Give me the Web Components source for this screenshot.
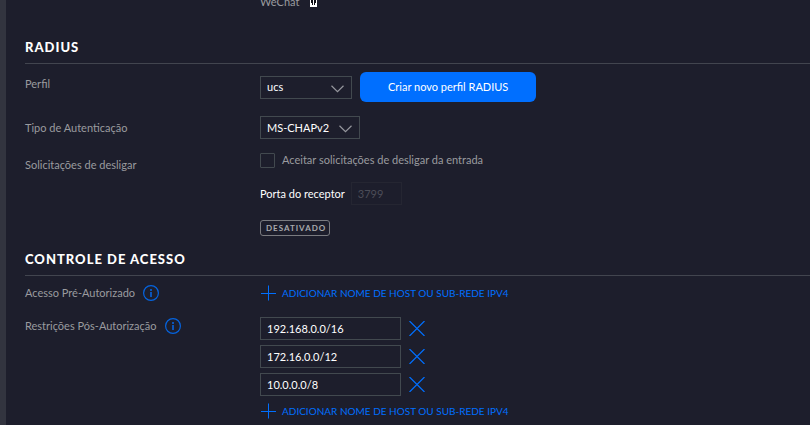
<!DOCTYPE html>
<html lang="pt-BR">
<head>
<meta charset="utf-8">
<meta name="viewport" content="width=device-width, initial-scale=1">
<title>RADIUS e controle de acesso</title>
<style>
  :root {
    --bg: #1d1e2c; --rail: #32343f; --line: #42454f; --field: #42494f;
    --muted: #9a9b9f; --bright: #fff; --accent: #006fff;
  }
  html { background: var(--bg); }
  body { margin: 0; font: 11px/16px Lato, "Open Sans", sans-serif; color: var(--muted); overflow: hidden; }
</style>
</head>
<body>
<settings-page></settings-page>

<template id="t-page">
  <style>
    :host { display: flex; min-height: 100vh; }
    .rail { flex: 0 0 6px; background: var(--rail); }
    main { flex: 1; min-width: 0; padding-left: 19px; }
    .cut { margin: -6px 0 -1px; }
    .cut svg { display: block; margin-bottom: 3px; }
    .inline { display: flex; align-items: center; gap: 8px; }
    .wechat { display: flex; align-items: flex-end; gap: 11px; }
    .stack { display: flex; flex-direction: column; align-items: flex-start; }
    .hosts { gap: 5px; }
    .hosts add-button { margin-top: 2px; }
    .port { margin: 14px 0 15px; }
  </style>
  <div class="rail"></div>
  <main>
    <form-row class="cut">
      <div class="wechat">WeChat
        <svg width="7" height="9" viewBox="0 0 7 9" aria-hidden="true"><path fill="#fff" d="M0 0h7v9H0z"/><path fill="#0b0b12" d="M1 1h5v4H5v2H4V5H3v2H2V5H1z"/><path fill="#fff" d="M3 2h1v3H3z"/></svg>
      </div>
    </form-row>
    <form-section heading="RADIUS">
      <form-row label="Perfil" style="margin-top: 8px; --label-pad: 4px">
        <div class="inline">
          <select-box label="Perfil" value="ucs" style="width: 92px"></select-box>
          <primary-button>Criar novo perfil RADIUS</primary-button>
        </div>
      </form-row>
      <form-row label="Tipo de Autenticação" style="margin-top: 14px; --label-pad: 4px">
        <select-box label="Tipo de Autenticação" value="MS-CHAPv2" style="width: 100px"></select-box>
      </form-row>
      <form-row label="Solicitações de desligar" style="margin-top: 13px; --label-pad: 5px">
        <div class="stack">
          <check-box>Aceitar solicitações de desligar da entrada</check-box>
          <text-field class="port" label="Porta do receptor" value="3799" disabled style="--w: 51px"></text-field>
          <status-badge>DESATIVADO</status-badge>
        </div>
      </form-row>
    </form-section>
    <form-section heading="CONTROLE DE ACESSO" style="margin-top: -15px">
      <form-row label="Acesso Pré-Autorizado" info style="margin-top: 9px">
        <add-button>ADICIONAR NOME DE HOST OU SUB-REDE IPV4</add-button>
      </form-row>
      <form-row label="Restrições Pós-Autorização" info style="margin-top: 16px; --label-pad: 1px">
        <div class="stack hosts">
          <host-entry value="192.168.0.0/16"></host-entry>
          <host-entry value="172.16.0.0/12"></host-entry>
          <host-entry value="10.0.0.0/8"></host-entry>
          <add-button>ADICIONAR NOME DE HOST OU SUB-REDE IPV4</add-button>
        </div>
      </form-row>
    </form-section>
  </main>
</template>

<template id="t-section">
  <style>
    :host { display: block; padding-top: 27px; }
    h2 { margin: 0; padding: 1px 0 6px; font: 900 13px/20px Lato, sans-serif; color: var(--bright); border-bottom: 1px solid var(--line); }
    h2 { letter-spacing: 1px; }
  </style>
  <section><h2></h2><slot></slot></section>
</template>

<template id="t-row">
  <style>
    :host { display: grid; grid-template-columns: 235px minmax(0, 1fr); align-items: start; }
    .label { display: flex; align-items: center; gap: 8px; padding-top: var(--label-pad, 0); }
  </style>
  <div class="label"><span></span></div>
  <div><slot></slot></div>
</template>

<template id="t-select">
  <style>
    :host { display: block; position: relative; box-sizing: border-box; }
    select { appearance: none; display: block; width: 100%; height: 23px; margin: 0; padding: 0 24px 0 6px; border: 1px solid var(--field); border-radius: 0; background: transparent; color: var(--bright); font: inherit; }
    svg { position: absolute; right: 8px; top: 9px; pointer-events: none; }
  </style>
  <select><option></option></select>
  <svg width="13" height="8" viewBox="0 0 13 8" fill="none" stroke="#96979d" stroke-width="1.2" aria-hidden="true"><path d="M.5.8l6 5.8 6-5.8"/></svg>
</template>

<template id="t-primary">
  <style>
    :host { display: block; }
    button { display: block; height: 30px; margin: 0; padding: 0 28px; border: 0; border-radius: 6px; background: var(--accent); color: #fff; font: inherit; white-space: nowrap; }
  </style>
  <button type="button"><slot></slot></button>
</template>

<template id="t-check">
  <style>
    :host { display: block; }
    label { display: flex; align-items: center; gap: 7px; }
    input { appearance: none; width: 15px; height: 15px; margin: 0; border: 1px solid var(--field); border-radius: 1px; }
    input:checked { background: var(--accent); }
  </style>
  <label><input type="checkbox"><span><slot></slot></span></label>
</template>

<template id="t-field">
  <style>
    :host { display: block; color: var(--bright); }
    label { display: flex; align-items: center; gap: 6px; }
    input { box-sizing: border-box; width: var(--w); height: 23px; margin: 0; padding: 0 6px; border: 1px solid var(--field); background: transparent; color: var(--bright); font: inherit; }
    input:disabled { border-color: #252632; color: #4c4d58; }
  </style>
  <label><span></span><input type="text"></label>
</template>

<template id="t-badge">
  <style>
    :host { display: block; box-sizing: border-box; height: 16px; padding: 0 3px 0 5px; border: 1px solid #7a7b80; border-radius: 3px; color: #a9aaae; font: 700 8px/14px Lato, sans-serif; letter-spacing: 1px; }
  </style>
  <slot></slot>
</template>

<template id="t-add">
  <style>
    :host { display: block; }
    button { display: flex; align-items: center; gap: 6px; height: 16px; margin: 0; padding: 0; border: 0; background: none; color: var(--accent); font: 10px/16px Lato, sans-serif; white-space: nowrap; }
  </style>
  <button type="button">
    <svg width="16" height="16" viewBox="0 0 16 16" stroke="currentColor" aria-hidden="true"><path d="M8.500.5v15M1 8.500h15"/></svg>
    <span><slot></slot></span>
  </button>
</template>

<template id="t-host">
  <style>
    :host { display: flex; align-items: center; gap: 8px; }
    input { box-sizing: border-box; width: 141px; height: 23px; margin: 0; padding: 0 6px; border: 1px solid var(--field); background: transparent; color: var(--bright); font: inherit; }
    button { display: block; margin: 0; padding: 0; border: 0; background: none; color: var(--accent); }
    svg { display: block; }
  </style>
  <input type="text" aria-label="Host ou sub-rede IPv4">
  <button type="button" aria-label="Remover">
    <svg width="16" height="15" viewBox="0 0 16 15" stroke="currentColor" stroke-width="1.2" aria-hidden="true"><path d="M.5 0l15 15M15.500 0l-15 15"/></svg>
  </button>
</template>

<template id="t-info">
  <style>:host { display: block; } svg { display: block; }</style>
  <svg width="16" height="16" viewBox="0 0 16 16" role="img" aria-label="Informação"><circle cx="8" cy="8" r="7.400" fill="none" stroke="#0564e0" stroke-width="1.200"/><path fill="#0b55bb" d="M7 4h2v2H7zM7 7h2v5H7z"/></svg>
</template>

<script>
  const define = (name, id, setup = () => {}) => customElements.define(name, class extends HTMLElement {
    constructor() {
      super();
      this.attachShadow({ mode: 'open' }).append(document.getElementById(id).content.cloneNode(true));
    }
    connectedCallback() { setup(this, s => this.shadowRoot.querySelector(s)); }
  });
  define('info-icon', 't-info');
  define('form-section', 't-section', (el, $) => { $('h2').textContent = el.getAttribute('heading'); });
  define('form-row', 't-row', (el, $) => {
    $('span').textContent = el.getAttribute('label') || '';
    if (el.hasAttribute('info')) $('.label').append(document.createElement('info-icon'));
  });
  define('select-box', 't-select', (el, $) => {
    $('option').textContent = el.getAttribute('value');
    $('select').setAttribute('aria-label', el.getAttribute('label'));
  });
  define('primary-button', 't-primary');
  define('check-box', 't-check');
  define('text-field', 't-field', (el, $) => {
    $('span').textContent = el.getAttribute('label');
    $('input').value = el.getAttribute('value');
    $('input').disabled = el.hasAttribute('disabled');
  });
  define('status-badge', 't-badge');
  define('add-button', 't-add');
  define('host-entry', 't-host', (el, $) => { $('input').value = el.getAttribute('value'); });
  define('settings-page', 't-page');
</script>
</body>
</html>
